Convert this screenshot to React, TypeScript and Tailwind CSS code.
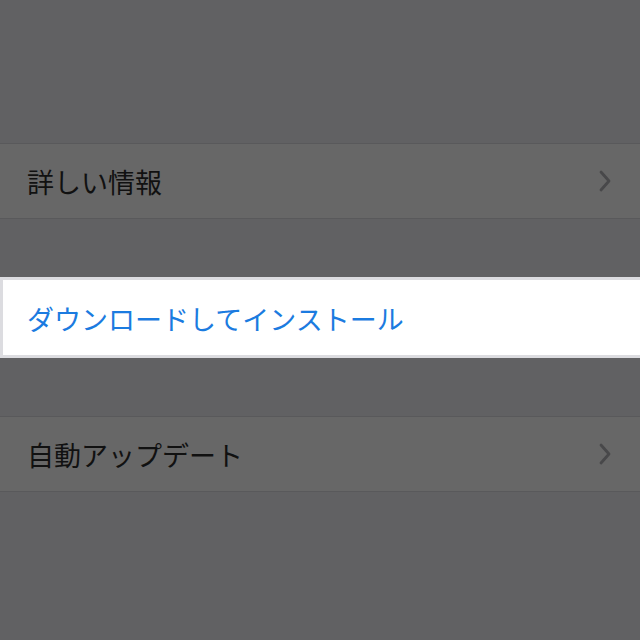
import React from "react";

const Chevron = () => (
  <svg width="12" height="22" viewBox="0 0 12 22" className="shrink-0">
    <path d="M2 2 L10 11 L2 20" fill="none" stroke="#48484a" strokeWidth="2.8" strokeLinecap="round" strokeLinejoin="round" />
  </svg>
);

const Row = ({ label }: { label: string }) => (
  <div className="flex h-[76px] items-center justify-between border-y border-[#59595b] bg-[#676767] pl-[27px] pr-[29px]">
    <span className="pt-[3px] text-[27px] text-[#111111]">{label}</span>
    <Chevron />
  </div>
);

export default function App() {
  return (
    <div
      className="flex h-[640px] w-[640px] flex-col overflow-hidden bg-[#616163]"
      style={{ fontFamily: '"Noto Sans CJK JP", "Noto Sans", sans-serif' }}
    >
      <div className="h-[143px]" />
      <Row label="詳しい情報" />
      <div className="h-[58px]" />
      <div className="flex h-[81px] items-center border-y-[3px] border-l-[3px] border-[#dcdce0] bg-white pl-[24px]">
        <span className="pt-[3px] text-[27px] text-[#1b7be0]">ダウンロードしてインストール</span>
      </div>
      <div className="h-[58px]" />
      <Row label="自動アップデート" />
    </div>
  );
}
